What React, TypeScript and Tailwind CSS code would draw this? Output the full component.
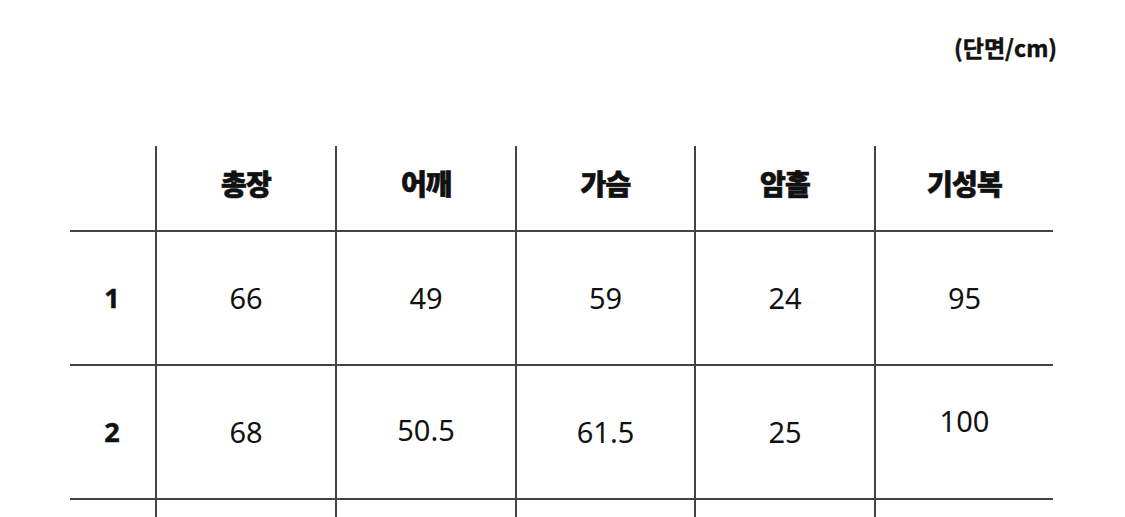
const headers = ["총장", "어깨", "가슴", "암홀", "기성복"];

const rows: { label: string; values: { v: string; cls?: string }[] }[] = [
  {
    label: "1",
    values: [{ v: "66" }, { v: "49" }, { v: "59" }, { v: "24" }, { v: "95" }],
  },
  {
    label: "2",
    values: [
      { v: "68" },
      { v: "50.5", cls: "-translate-y-[2px]" },
      { v: "61.5" },
      { v: "25" },
      { v: "100", cls: "-translate-y-[11px]" },
    ],
  },
  {
    label: "",
    values: [{ v: "" }, { v: "" }, { v: "" }, { v: "" }, { v: "" }],
  },
];

const gridCols = "grid grid-cols-[85px_180px_180px_179px_180px_179px]";

export default function App() {
  return (
    <div className="bg-white w-[1125px] h-[517px] overflow-hidden text-[#111] font-['Noto_Sans','Noto_Sans_CJK_KR',sans-serif]">
      <div className="h-[146px] flex justify-end pr-[68px] pt-[31px]">
        <span className="text-[23px] leading-[32px] font-bold font-['Noto_Sans_CJK_KR',sans-serif] [-webkit-text-stroke:0.5px_#111]">
          (단면/cm)
        </span>
      </div>

      <div className="ml-[70px] w-[983px]">
        {/* header row */}
        <div className={`${gridCols} h-[86px] border-b-2 border-[#444]`}>
          <div />
          {headers.map((h) => (
            <div
              key={h}
              className="border-l-2 border-[#444] flex items-center justify-center pb-[10px]"
            >
              <span className="text-[28px] font-black font-['Noto_Sans_CJK_KR',sans-serif] tracking-tight [-webkit-text-stroke:0.7px_#111]">
                {h}
              </span>
            </div>
          ))}
        </div>

        {rows.map((r, i) => (
          <div
            key={i}
            className={`${gridCols} h-[134px] border-b-2 border-[#444]`}
          >
            <div className="flex items-center justify-center pr-[1px]">
              <span className="text-[27px] font-bold [-webkit-text-stroke:0.5px_#111]">
                {r.label}
              </span>
            </div>
            {r.values.map((c, j) => (
              <div
                key={j}
                className="border-l-2 border-[#444] flex items-center justify-center"
              >
                <span className={`text-[29px] ${c.cls ?? ""}`}>{c.v}</span>
              </div>
            ))}
          </div>
        ))}
      </div>
    </div>
  );
}
